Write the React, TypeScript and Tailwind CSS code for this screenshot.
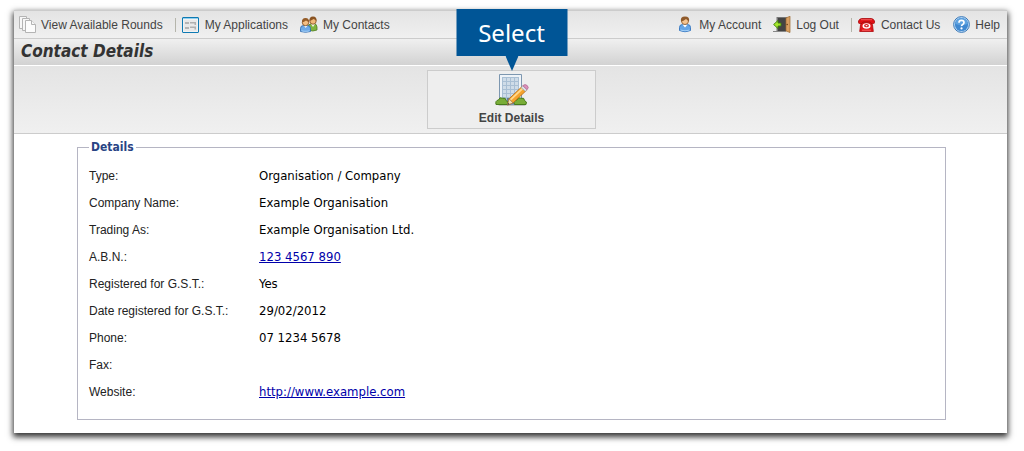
import type { ReactNode } from "react";

function PagesIcon() {
  return (
    <svg width="17" height="17" viewBox="0 0 17 17" fill="#f7f7f7" stroke="#b4b4b4" aria-hidden="true">
      <path d="M.5.5h7v12h-7z" />
      <path d="M3.5 2.5h7v12h-7z" />
      <path d="M6.5 4.5h6l4 4v8h-10z" fill="#fcfcfc" />
      <path d="M12.5 4.500v4h4" />
    </svg>
  );
}

function FormIcon() {
  return (
    <svg width="17" height="16" viewBox="0 0 17 16" aria-hidden="true">
      <rect x=".5" y=".5" width="16" height="15" rx=".5" fill="#f2f2f2" stroke="#0f7ab3" />
      <path d="M1 1h15v1H1z" fill="#8fd0f0" />
      <path d="M2 3h13v11H2z" fill="#e9e9e9" />
      <path d="M3 5h4v2H3zM3 10h4v2H3z" fill="#b5b5b5" />
      <path d="M8 5h6v3h-1.500V6.500H8zM8 9.500h6v3h-1.500V11H8z" fill="#b0b0b0" />
    </svg>
  );
}

function PeopleIcon() {
  return (
    <svg width="18" height="17" viewBox="0 0 18 17" aria-hidden="true">
      <path d="M8 14v-3q0-3 3-3h3q3 0 3 3v3q-4 2-9 0z" fill="#7fb43f" stroke="#527f25" strokeWidth=".8" />
      <path d="M11 8l2 3 2-3z" fill="#f4f8e6" />
      <circle cx="13" cy="5" r="3.200" fill="#f0b878" stroke="#7d4a1e" strokeWidth=".8" />
      <path d="M9.500 5q-.5-4.500 3.500-4.500T16.500 5q-1.500-1.500-3-2-2 1.500-4 2z" fill="#8a5423" />
      <path d="M.5 15.500v-3q0-3 3-3h4q3 0 3 3v3q-5 1.500-10 0z" fill="#6da9e6" stroke="#2b66ab" strokeWidth=".8" />
      <path d="M1.500 14.200q4 1.300 8 0v1q-4 1-8 0z" fill="#a5d0f7" />
      <path d="M4 9.500l1.700 2.500 1.700-2.500z" fill="#fff" />
      <circle cx="5.500" cy="6.500" r="3.200" fill="#f5bf82" stroke="#7d4a1e" strokeWidth=".8" />
      <path d="M2 6.500Q1.500 2 5.500 2T9 6.500Q7.500 5 6 4.500 4 6 2 6.500z" fill="#955c28" />
    </svg>
  );
}

function PersonIcon() {
  return (
    <svg width="12" height="17" viewBox="0 0 12 17" aria-hidden="true">
      <path d="M.5 14.500v-3q0-3 3-3h5q3 0 3 3v3q-5.500 2.500-11 0z" fill="#65a5e6" stroke="#3474bd" strokeWidth=".9" />
      <path d="M1.500 13.500q4.500 1.500 9 0v1q-4.500 1.500-9 0z" fill="#a5d0f7" />
      <path d="M3.500 8.500L6 11.500l2.500-3z" fill="#fff" />
      <circle cx="6" cy="5" r="3.500" fill="#f5c592" stroke="#8a5423" strokeWidth=".8" />
      <path d="M2 5.500Q1 .5 6 .5t4 5Q8.500 4 7 3 4.500 5 2 5.500z" fill="#8f5a2b" />
    </svg>
  );
}

function LogOutIcon() {
  return (
    <svg width="18" height="17" viewBox="0 0 18 17" aria-hidden="true">
      <path d="M3.500 1h11v14h-11z" fill="#777" />
      <path d="M5 2h9v13H5z" fill="#444" />
      <path d="M0 15.500h13" stroke="#888" />
      <path d="M13 2l4-1.800v16.300l-4-1.500z" fill="#d9a063" stroke="#9b682f" strokeWidth=".7" />
      <circle cx="14.200" cy="8.500" r=".8" fill="#6f4519" />
      <path d="M.6 8.500l4.400-4v2.500h3v3H5v2.500z" fill="#a4e62b" stroke="#3f7d0d" strokeWidth=".9" />
    </svg>
  );
}

function PhoneIcon() {
  return (
    <svg width="17" height="14" viewBox="0 0 17 14" aria-hidden="true">
      <path d="M3.500 4.500h10l1 2.500.8 6.500H1.700L2.500 7z" fill="#e0161a" stroke="#ad0a0d" strokeWidth=".8" />
      <path d="M.5 4.500V3Q1.500.5 4 .5h9q2.500 0 3.500 2.500v1.500q0 1-1 1h-2.500l-1-1.500h-7l-1 1.500H1.500q-1 0-1-1z" fill="#df1014" stroke="#a9080b" strokeWidth=".8" />
      <ellipse cx="8.500" cy="8" rx="4" ry="2.800" fill="#fff" />
      <ellipse cx="8.500" cy="7.700" rx="2.400" ry="1.600" fill="#d3191d" />
      <ellipse cx="8.500" cy="7.700" rx="1" ry=".6" fill="#fff" />
      <path d="M4 12.200h9" stroke="#f77" strokeWidth=".8" />
      <path d="M3 1.700h11" stroke="#f46a6a" strokeWidth=".8" />
    </svg>
  );
}

function HelpIcon() {
  return (
    <svg width="17" height="17" viewBox="0 0 17 17" aria-hidden="true">
      <circle cx="8.500" cy="8.500" r="7.900" fill="#b7d8f5" stroke="#3d7ab8" />
      <circle cx="8.500" cy="8.500" r="6.600" fill="#3f88d0" />
      <path d="M2.300 8a6.200 6 0 0 1 12.400 0q-6 2-12.400 0z" fill="#5fa3e0" />
      <path d="M6 6.700Q6 4.400 8.500 4.400T11 6.500q0 1.200-1.300 1.900T8.500 10.200" fill="none" stroke="#fff" strokeWidth="1.700" />
      <circle cx="8.500" cy="12.400" r="1.100" fill="#fff" />
    </svg>
  );
}

function EditBuildingIcon() {
  return (
    <svg width="34" height="34" viewBox="0 0 34 34" aria-hidden="true">
      <path d="M5 31.500h24l2 1.500H3z" fill="#c3c3c3" />
      <path d="M4.500 1.500h22v30h-22z" fill="#eef3f8" stroke="#7d97b0" />
      <path d="M7 4h17v25H7z" fill="#a9bfd4" />
      <path d="M8 5h3v3H8zM12 5h3v3h-3zM16 5h3v3h-3zM20 5h3v3h-3zM8 9h3v3H8zM12 9h3v3h-3zM16 9h3v3h-3zM20 9h3v3h-3zM8 13h3v3H8zM12 13h3v3h-3zM16 13h3v3h-3zM20 13h3v3h-3zM8 17h3v3H8zM12 17h3v3h-3zM16 17h3v3h-3zM20 17h3v3h-3zM8 21h3v3H8zM12 21h3v3h-3zM16 21h3v3h-3zM20 21h3v3h-3z" fill="#cfdce8" />
      <path d="M12 25h7v6h-7z" fill="#607f9d" />
      <path d="M1 31.500q-1-4 2.500-4.500 1-3.500 4-1.800 3.500-.8 3.500 2.300 3 1 1.500 4z" fill="#79ad38" stroke="#487b1c" />
      <path d="M19.500 31.500q-1-4 2.500-4.500 1-3.500 4-1.800 3.500-.8 3.500 2.300 3 1 1.500 4z" fill="#79ad38" stroke="#487b1c" />
      <path d="M12.500 32l1.600-6.200L27 13.500l4.300 4L18 30z" fill="#f5a32d" stroke="#b86b12" strokeWidth=".8" />
      <path d="M15.500 26.800L28 15" stroke="#ffd88c" strokeWidth="1.800" />
      <path d="M12.500 32l1.600-6.200L18 30z" fill="#f5dfb6" stroke="#98774a" strokeWidth=".7" />
      <path d="M12.500 32l.6-2.200 1.500 1.500z" fill="#444" />
      <path d="M26 14.400l1.800-1.700 4.300 4-1.800 1.700z" fill="#dce2e7" stroke="#8d9399" strokeWidth=".6" />
      <path d="M27.800 12.700q2.200-2.200 4.400-.2t-.1 4.200z" fill="#dc91bb" stroke="#ae668e" strokeWidth=".7" />
    </svg>
  );
}

function NavLink({ icon, children }: { icon: ReactNode; children: ReactNode }) {
  return (
    <a href="#" className="flex items-center gap-[5px] whitespace-nowrap">
      <span className="flex w-[18px] shrink-0 justify-center">{icon}</span>
      {children}
    </a>
  );
}

function Separator() {
  return <span className="h-[14px] w-px bg-[#b5b5ab]" />;
}

const details: { label: string; value: string; href?: string }[] = [
  { label: "Type:", value: "Organisation / Company" },
  { label: "Company Name:", value: "Example Organisation" },
  { label: "Trading As:", value: "Example Organisation Ltd." },
  { label: "A.B.N.:", value: "123 4567 890", href: "#" },
  { label: "Registered for G.S.T.:", value: "Yes" },
  { label: "Date registered for G.S.T.:", value: "29/02/2012" },
  { label: "Phone:", value: "07 1234 5678" },
  { label: "Fax:", value: "" },
  { label: "Website:", value: "http://www.example.com", href: "http://www.example.com" },
];

export default function App() {
  return (
    <div className="bg-white pt-[10px] pr-[17px] pb-[18px] pl-[14px] font-['Liberation_Sans',Arial,sans-serif]">
      <div className="bg-white shadow-[0_3px_6px_1px_rgba(0,0,0,0.8)]">
        <header className="flex h-[29px] items-center justify-between border-y border-[#cccccc] bg-linear-to-b from-[#e4e4e4] to-[#f0f0f0] pr-[7px] pl-1 text-[12px] text-[#444444]">
          <nav aria-label="Main" className="flex items-center gap-3">
            <NavLink icon={<PagesIcon />}>View Available Rounds</NavLink>
            <div className="flex items-center gap-[6px]">
              <Separator />
              <NavLink icon={<FormIcon />}>My Applications</NavLink>
            </div>
            <NavLink icon={<PeopleIcon />}>My Contacts</NavLink>
          </nav>
          <nav aria-label="Account" className="flex items-center gap-3">
            <NavLink icon={<PersonIcon />}>My Account</NavLink>
            <NavLink icon={<LogOutIcon />}>Log Out</NavLink>
            <div className="flex items-center gap-[6px]">
              <Separator />
              <NavLink icon={<PhoneIcon />}>Contact Us</NavLink>
            </div>
            <NavLink icon={<HelpIcon />}>Help</NavLink>
          </nav>
        </header>

        <h1 className="flex h-[27px] items-center border-b border-white bg-linear-to-b from-[#f0f0f0] to-[#d2d2d2] pl-[7px] font-['DejaVu_Sans_Condensed','DejaVu_Sans',sans-serif] text-[17px] font-bold text-[#333333] italic">
          Contact Details
        </h1>

        <div className="flex justify-center border-b border-[#cccccc] bg-linear-to-b from-[#e4e4e4] to-[#f0f0f0] pt-1 pb-1 pl-[2px]">
          <div className="relative">
            <button
              type="button"
              className="flex h-[59px] w-[169px] flex-col items-center border border-[#cccccc] bg-[#eeeeee] pt-[2px] text-[12px] leading-4 font-bold text-[#444444]"
            >
              <EditBuildingIcon />
              <span className="pt-[3px]">Edit Details</span>
            </button>
            <div
              role="tooltip"
              className="absolute bottom-full left-1/2 -mb-px flex -translate-x-1/2 flex-col items-center font-['Noto_Sans',sans-serif] text-[24px] text-white"
            >
              <span className="flex h-[47px] w-[111px] items-center justify-center bg-[#005596]">Select</span>
              <svg width="13" height="15" viewBox="0 0 13 15" fill="#005596" aria-hidden="true">
                <path d="M0 0h13L6.500 15z" />
              </svg>
            </div>
          </div>
        </div>

        <main className="pt-[5px] pr-[61px] pb-[13px] pl-[63px]">
          <fieldset className="border border-[#b5b5c3] px-[11px] pb-[14px]">
            <legend className="px-[2px] font-['DejaVu_Sans_Condensed','DejaVu_Sans',sans-serif] text-[12px] leading-4 font-bold text-[#284484]">
              Details
            </legend>
            <table className="mt-[7px] w-full text-left text-[12px] text-black">
              <tbody>
                {details.map(({ label, value, href }) => (
                  <tr key={label} className="h-[27px]">
                    <th scope="row" className="w-[170px] p-0 font-normal text-[#222222]">
                      {label}
                    </th>
                    <td className="p-0 font-['DejaVu_Sans_Condensed','DejaVu_Sans',sans-serif] text-[13px] leading-4">
                      {href ? (
                        <a href={href} className="text-[#0000aa] underline">
                          {value}
                        </a>
                      ) : (
                        value
                      )}
                    </td>
                  </tr>
                ))}
              </tbody>
            </table>
          </fieldset>
        </main>
      </div>
    </div>
  );
}
